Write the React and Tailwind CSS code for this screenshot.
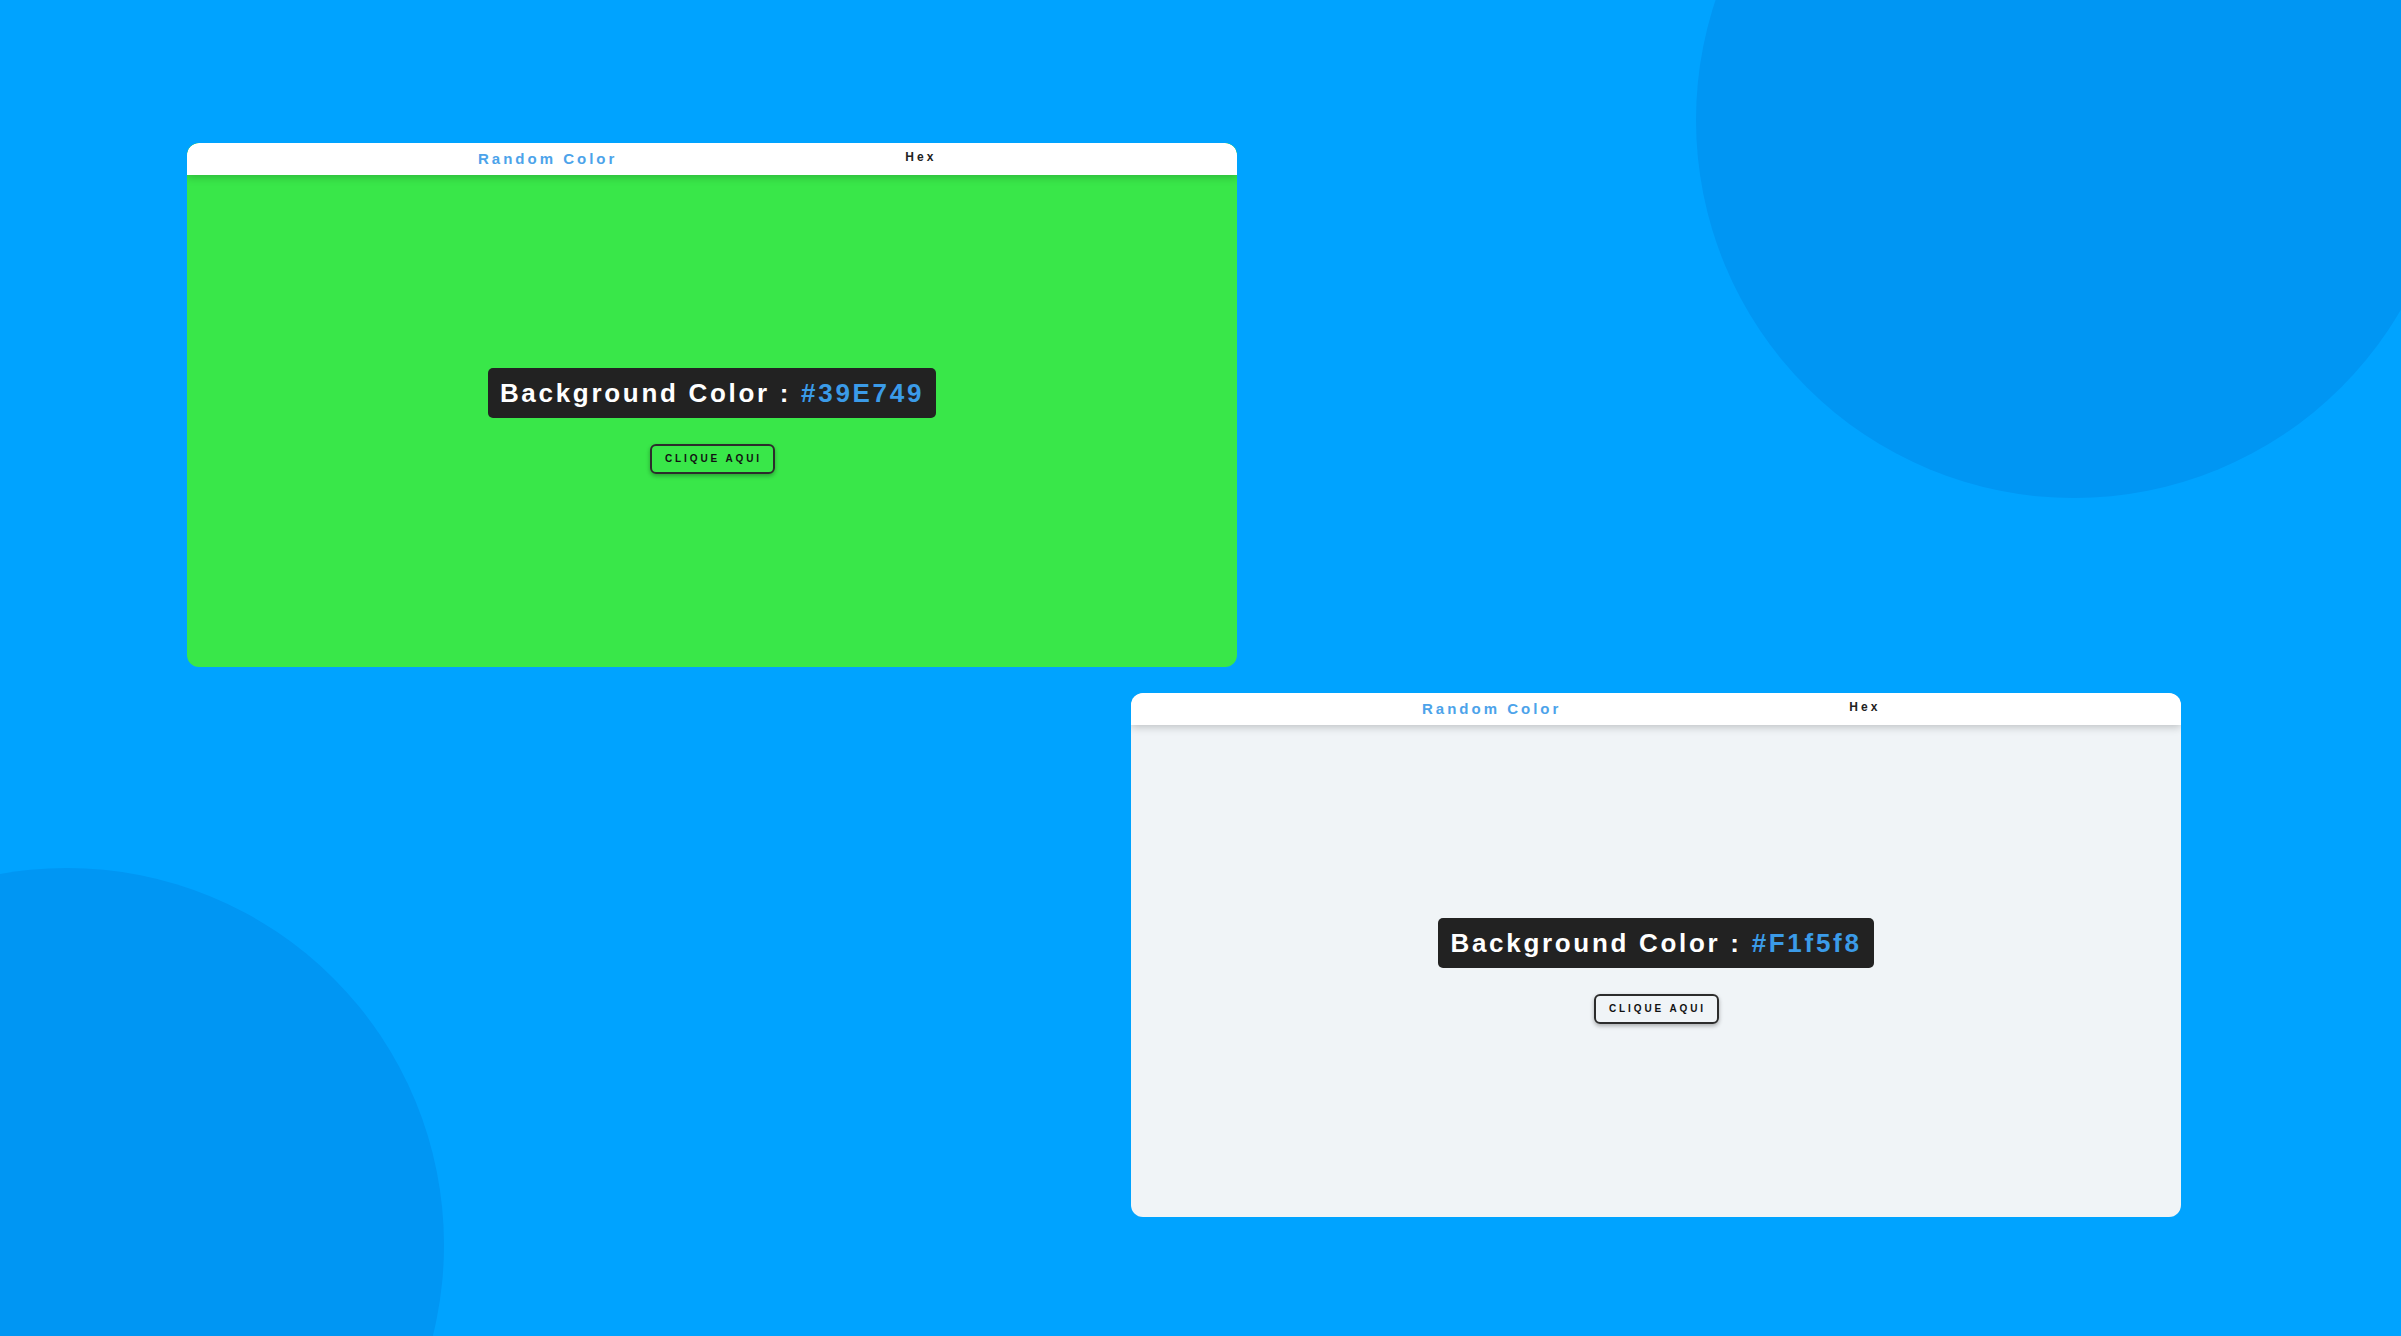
import React from 'react';

const font = { fontFamily: '"Liberation Sans", Arial, sans-serif' };

function ColorCard({ bg, hex, className }) {
  return (
    <div
      className={`w-[1050px] h-[524px] rounded-xl overflow-hidden flex flex-col ${className}`}
      style={{ backgroundColor: bg }}
    >
      {/* Top nav */}
      <div className="relative z-10 h-[32px] shrink-0 bg-white rounded-t-xl shadow-[0_2px_8px_rgba(0,0,0,0.22)] flex items-start pt-[7px] pl-[291px] gap-[288px]">
        <span className="text-[15px] leading-[18px] font-bold tracking-[3px] text-[#4ca3ea]">
          Random Color
        </span>
        <span className="text-[12px] leading-[14px] font-bold tracking-[3px] text-[#222]">
          Hex
        </span>
      </div>

      {/* Body */}
      <div className="flex-1 flex flex-col items-center justify-center gap-[26px]">
        <div className="h-[50px] px-[12px] rounded-[5px] bg-[#222222] flex items-center">
          <span className="text-[26px] leading-none font-bold tracking-[2.7px] text-white whitespace-nowrap">
            Background Color : <span className="text-[#3b9be8]">{hex}</span>
          </span>
        </div>
        <button className="h-[30px] w-[125px] rounded-[6px] border-2 border-[#2c2c2c] shadow-[0_2px_4px_rgba(0,0,0,0.3)] flex items-center justify-center pl-[3px]">
          <span className="text-[10px] leading-none font-bold tracking-[2.9px] text-[#111]">
            CLIQUE AQUI
          </span>
        </button>
      </div>
    </div>
  );
}

export default function App() {
  return (
    <div className="relative w-full h-[1336px] overflow-hidden bg-[#00a3ff]" style={font}>
      {/* decorative circles */}
      <div className="absolute left-[1696px] top-[-258px] w-[756px] h-[756px] rounded-full bg-[#0096f3]" />
      <div className="absolute left-[-310px] top-[868px] w-[754px] h-[754px] rounded-full bg-[#0096f3]" />

      <div className="relative flex flex-col gap-[26px] pt-[143px]">
        <ColorCard bg="#39E749" hex="#39E749" className="ml-[187px]" />
        <ColorCard bg="#f0f4f7" hex="#F1f5f8" className="ml-[1131px]" />
      </div>
    </div>
  );
}
